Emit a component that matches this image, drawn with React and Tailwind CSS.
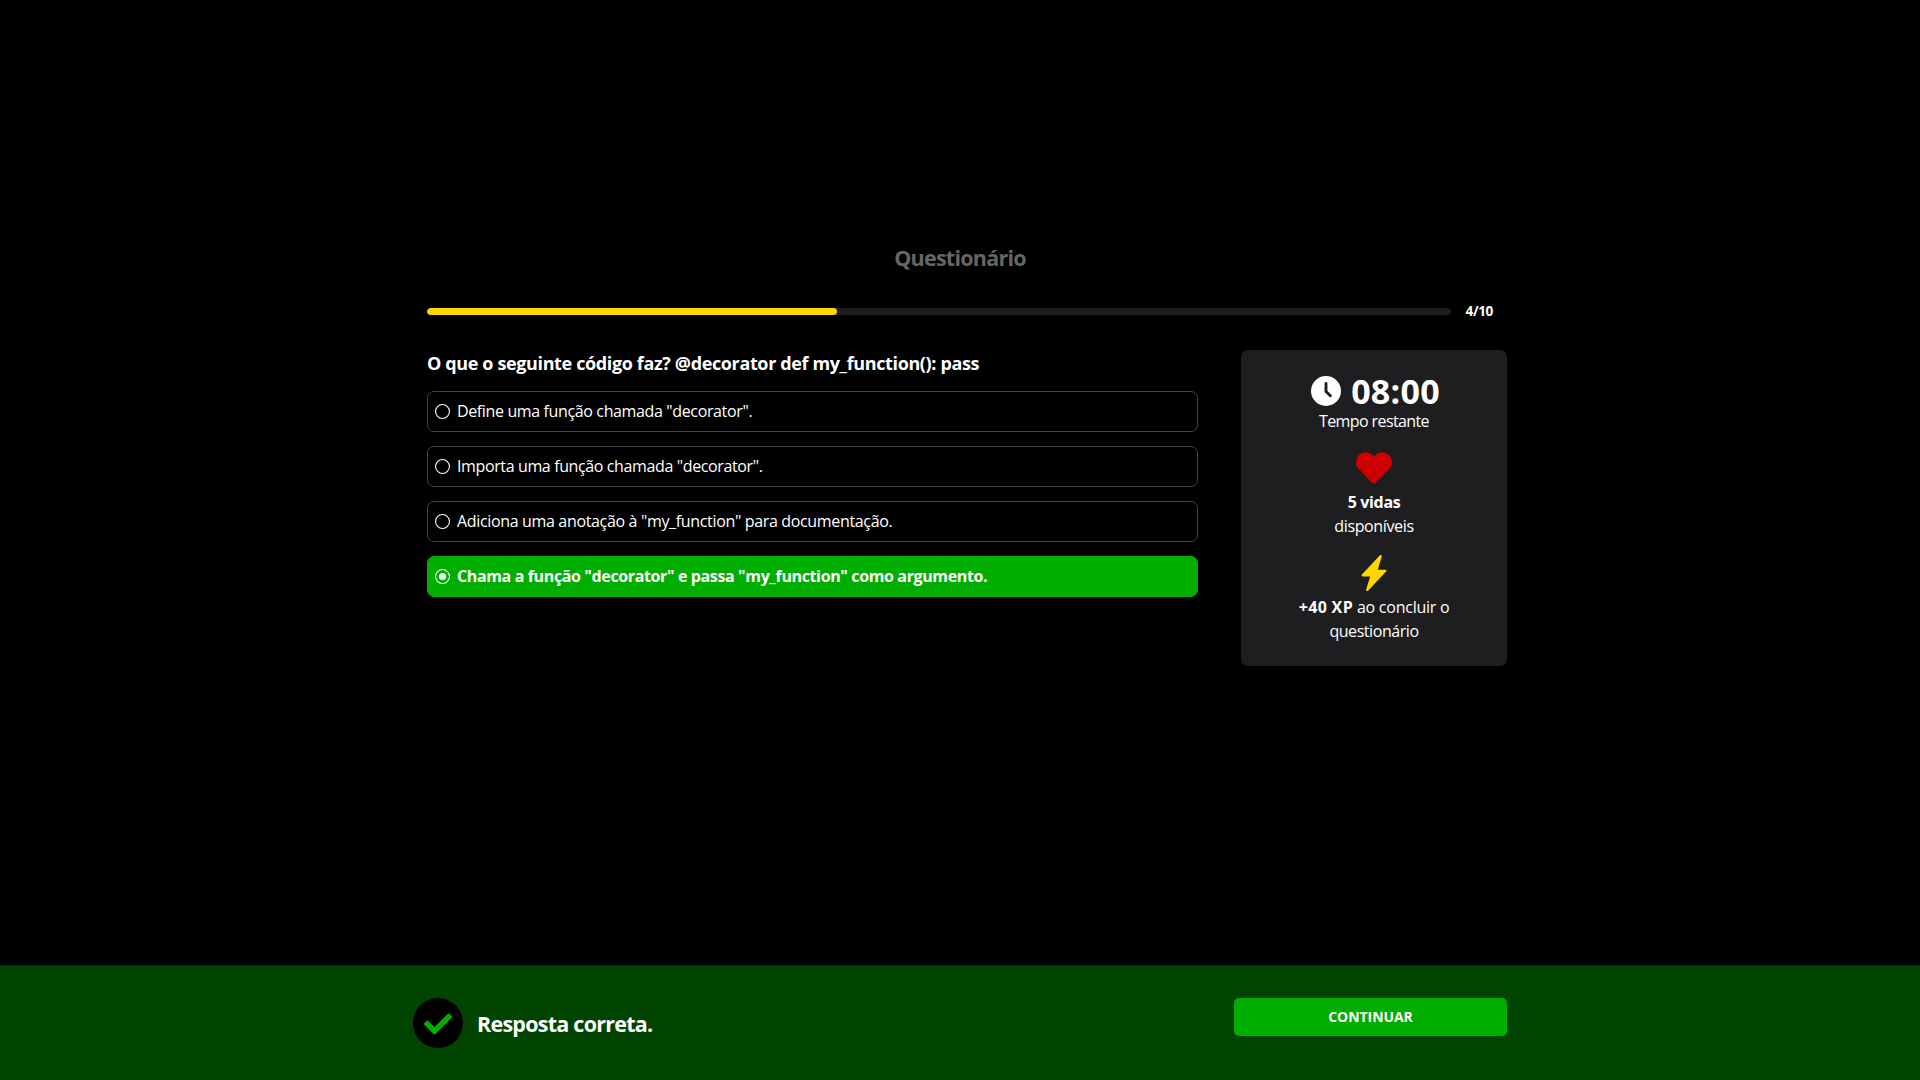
import { FaCheck, FaHeart } from "react-icons/fa";
import { BsFillLightningChargeFill } from "react-icons/bs";

const options = [
  { text: 'Define uma função chamada "decorator".', spacing: "tracking-[-0.368px]" },
  { text: 'Importa uma função chamada "decorator".', spacing: "tracking-[-0.377px]" },
  { text: 'Adiciona uma anotação à "my_function" para documentação.', spacing: "tracking-[-0.341px]" },
  {
    text: 'Chama a função "decorator" e passa "my_function" como argumento.',
    spacing: "tracking-[-0.37px]",
    selected: true,
  },
];

function Radio({ checked }) {
  return (
    <svg viewBox="0 0 15 15" className="size-[15px] shrink-0" fill="none">
      <circle cx="7.5" cy="7.5" r="6.95" stroke="currentColor" strokeWidth="1.1" />
      {checked && <circle cx="7.5" cy="7.5" r="3.6" fill="currentColor" />}
    </svg>
  );
}

function Clock() {
  return (
    <svg viewBox="0 0 30 30" className="size-[30px] shrink-0" fill="none">
      <circle cx="15" cy="15" r="15" fill="white" />
      <path d="M15 7.4V15.5L19.4 19.7" stroke="#1e1e20" strokeWidth="2.9" strokeLinecap="round" strokeLinejoin="round" />
    </svg>
  );
}

function Option({ text, spacing, selected }) {
  return (
    <div
      className={
        "flex h-[41px] items-center gap-[7px] rounded-[7px] border pl-[7px] " +
        (selected ? "border-[#00ae00] bg-[#00ae00] font-bold" : "border-[#444444]")
      }
    >
      <Radio checked={selected} />
      <span className={"-mt-px leading-6 whitespace-nowrap " + spacing}>{text}</span>
    </div>
  );
}

export default function App() {
  return (
    <div className="flex h-screen flex-col overflow-hidden bg-black font-['Open_Sans','Noto_Sans',sans-serif] text-base leading-6 text-white">
      <main className="mx-auto w-[1066px] flex-1 pt-[242px]">
        <h1 className="text-center text-[21.5px] leading-8 font-bold tracking-[-0.75px] text-[#666666]">
          Questionário
        </h1>

        <div className="mt-[25px] flex h-6 items-center">
          <div className="h-[7px] w-[1024px] shrink-0 overflow-hidden rounded-[4px] bg-[#1e1e20]">
            <div className="h-full w-[40%] rounded-[4px] bg-[#ffd700]" />
          </div>
          <span className="ml-[14.5px] text-[13.6px] font-bold tracking-[-0.35px]">4/10</span>
        </div>

        <div className="mt-[27px] flex w-[1080px] items-start justify-between">
          <section className="w-[771px]">
            <h2 className="mb-[15px] text-[18px] leading-[26px] font-bold tracking-[-0.368px] whitespace-nowrap">
              O que o seguinte código faz? @decorator def my_function(): pass
            </h2>
            <div className="flex flex-col gap-[14px]">
              {options.map((o) => (
                <Option key={o.text} {...o} />
              ))}
            </div>
          </section>

          <aside className="flex h-[316px] w-[266px] flex-col items-center rounded-[7px] bg-[#1e1e20] pt-[23px] text-center">
            <div className="flex h-9 items-center gap-[10px] pl-[3px]">
              <Clock />
              <span className="text-[34px] leading-9 font-bold tracking-[0.25px]">08:00</span>
            </div>
            <span className="tracking-[-0.6px]">Tempo restante</span>
            <FaHeart className="mt-[17px] size-9 text-[#cc0000]" />
            <span className="mt-1 font-bold tracking-[-0.34px]">5 vidas</span>
            <span className="tracking-[-0.37px]">disponíveis</span>
            <BsFillLightningChargeFill className="mt-[17px] size-9 text-[#ffd700]" />
            <p className="mt-1 tracking-[-0.25px]">
              <b className="tracking-[0.34px]">+40 XP</b> ao concluir o
            </p>
            <span className="tracking-[-0.44px]">questionário</span>
          </aside>
        </div>
      </main>

      <footer className="h-[115px] border-t border-[#1e1e20] bg-[#004400]">
        <div className="mx-auto flex w-[1094px] items-start justify-between pt-8">
          <div className="flex items-center gap-[14px]">
            <div className="flex size-[50px] items-center justify-center rounded-full bg-black">
              <FaCheck className="mt-px size-7 text-[#00ae00]" />
            </div>
            <span className="mt-[2px] text-[21.5px] font-bold tracking-[-0.75px]">Resposta correta.</span>
          </div>
          <button className="h-[38px] w-[273px] rounded-[5px] bg-[#00ae00] text-sm font-bold tracking-[-0.05px]">
            CONTINUAR
          </button>
        </div>
      </footer>
    </div>
  );
}
